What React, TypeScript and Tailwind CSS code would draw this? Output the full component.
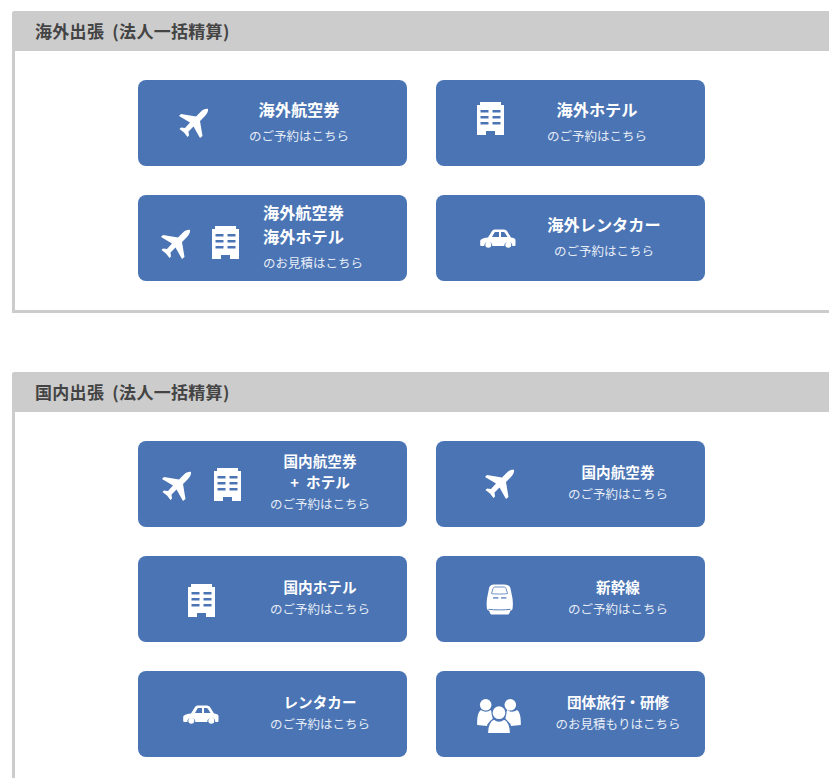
import React from 'react';

const Plane = () => (
  <svg viewBox="0 0 31 31" className="w-[31px] h-[31px] fill-white">
    <path d="M30 1c-2-.5-5 .5-7 2.500L18 8.500 3 6 1 8l11 6.500L7 20l-4-.5L1.500 21 6 24.500 9.500 29l1.500-1.500-.5-4 5-5L22 30l2.500-2L22 13l5-5c2-2 3.500-5 3-7z" />
  </svg>
);

const Hotel = () => (
  <svg viewBox="0 0 27 33" className="w-[27px] h-[33px] fill-white">
    <path
      fillRule="evenodd"
      d="M3 0h21v3h3v30h-9v-4H9v4H0V3h3zM3.500 8v2.500h8V8zm12 0v2.500h8V8zM3.500 14v2.500h8V14zm12 0v2.500h8V14zM3.500 20v2.500h8V20zm12 0v2.500h8V20z"
    />
  </svg>
);

const Car = () => (
  <svg viewBox="0 0 36 19" className="w-[36px] h-[19px] fill-white">
    <path
      fillRule="evenodd"
      d="M.5 11C2 9.500 5 8.800 8 8.500L12 2C13 .8 14 .5 16 .5h7c2 0 3 .5 4 1.500l4 6.500c2 .3 4.500 .8 4.500 2.500v4.500c0 1-.5 1.500-1.500 1.500h-1.700a4 4 0 0 0-8 0H12.300a4 4 0 0 0-8 0H1.500C.5 17 .2 16.500 .2 15.500V12zM12 8l2.500-4.500C15 3 15.500 3 16 3h3v5zm9-5h2c1 0 1.500 .2 2 1l2.500 4H21z"
    />
    <circle cx="8.300" cy="15.800" r="3" />
    <circle cx="28.300" cy="15.800" r="3" />
  </svg>
);

const Train = () => (
  <svg viewBox="0 0 27 31" className="w-[27px] h-[31px]">
    <path
      className="fill-white"
      d="M9 .5h9c4 0 6 1.500 6.500 4l2 10c.5 4 .5 7 0 10.500-.5 1.500-1.500 1.500-2 1.500l-1 2.500c-.5 1-1 1.500-2 1.500H6c-1 0-1.500-.5-2-1.500L3 26.500c-.5 0-1.500 0-2-1.500-.5-3.500-.5-6.500 0-10.500l2-10C3.500 2 5 .5 9 .5z"
    />
    <path d="M5.500 9.500 7 4.500C7.300 3.500 8 3 9 3h9c1 0 1.700 .5 2 1.500l1.500 5c-2 .7-14 .7-16 0z" className="fill-none stroke-[#4a74b4]" strokeWidth=".8" />
    <rect x="7" y="13" width="5.500" height="1.800" rx=".6" className="fill-[#7f9ccb]" />
    <rect x="15" y="13" width="5.500" height="1.800" rx=".6" className="fill-[#7f9ccb]" />
    <path d="M2.500 25.300c6 .8 16 .8 22 0" className="stroke-[#4a74b4] fill-none" strokeWidth=".9" />
  </svg>
);

const Users = () => (
  <svg viewBox="0 0 44 34" className="w-[44px] h-[34px] fill-white">
    <circle cx="8.700" cy="5.800" r="5.800" />
    <circle cx="33.300" cy="5.800" r="5.800" />
    <path d="M.2 26C0 18 1 13 4 11c3 2.200 7 2.200 9.500 0 1 1 2 2.500 2 5v4l-5 5-.5 2z" />
    <path d="M43.800 26C44 18 43 13 40 11c-3 2.200-7 2.200-9.500 0-1 1-2 2.500-2 5v4l5 5 .5 2z" />
    <circle cx="22" cy="13.700" r="7" className="stroke-[#4a74b4]" strokeWidth="1.200" />
    <path d="M10.500 34.500c0-8 2-12.500 6.500-14.500 3 2.500 7 2.500 10 0 4.500 2 6.500 6.500 6.500 14.500z" className="stroke-[#4a74b4]" strokeWidth="1.200" />
  </svg>
);

const PlaneHotel = ({ gap }: { gap: string }) => (
  <div className={`flex items-center ${gap}`}>
    <div className="pt-[5px]">
      <Plane />
    </div>
    <Hotel />
  </div>
);

type Item = {
  icon: React.ReactNode;
  iconBox: string;
  textBox: string;
  titles: string[];
  big?: boolean;
  sub: string;
};

const overseas: Item[] = [
  {
    icon: <Plane />,
    iconBox: 'w-[110px]',
    textBox: 'w-[102px] items-center',
    titles: ['海外航空券'],
    big: true,
    sub: 'のご予約はこちら',
  },
  {
    icon: <Hotel />,
    iconBox: 'w-[108px] pb-[9px]',
    textBox: 'w-[106px] items-center',
    titles: ['海外ホテル'],
    big: true,
    sub: 'のご予約はこちら',
  },
  {
    icon: <PlaneHotel gap="gap-[21px]" />,
    iconBox: 'w-[123px] pt-[8px]',
    textBox: 'ml-[2px] w-[110px] items-start',
    titles: ['海外航空券', '海外ホテル'],
    big: true,
    sub: 'のお見積はこちら',
  },
  {
    icon: <Car />,
    iconBox: 'w-[124px]',
    textBox: 'w-[88px] items-center',
    titles: ['海外レンタカー'],
    big: true,
    sub: 'のご予約はこちら',
  },
];

const domestic: Item[] = [
  {
    icon: <PlaneHotel gap="gap-[22px]" />,
    iconBox: 'w-[125px]',
    textBox: 'ml-[2px] w-[110px] items-center',
    titles: ['国内航空券', '+ ホテル'],
    sub: 'のご予約はこちら',
  },
  {
    icon: <Plane />,
    iconBox: 'w-[126px]',
    textBox: 'w-[112px] items-center',
    titles: ['国内航空券'],
    sub: 'のご予約はこちら',
  },
  {
    icon: <Hotel />,
    iconBox: 'w-[126px] pt-[2px]',
    textBox: 'w-[112px] items-center',
    titles: ['国内ホテル'],
    sub: 'のご予約はこちら',
  },
  {
    icon: <Train />,
    iconBox: 'w-[126px]',
    textBox: 'w-[112px] items-center',
    titles: ['新幹線'],
    sub: 'のご予約はこちら',
  },
  {
    icon: <Car />,
    iconBox: 'w-[125px]',
    textBox: 'w-[114px] items-center',
    titles: ['レンタカー'],
    sub: 'のご予約はこちら',
  },
  {
    icon: <Users />,
    iconBox: 'w-[126px] pt-[4px]',
    textBox: 'w-[112px] items-center',
    titles: ['団体旅行・研修'],
    sub: 'のお見積もりはこちら',
  },
];

const Tile = ({ item }: { item: Item }) => (
  <a className="flex items-center h-[86px] rounded-lg bg-[#4a74b4] text-white">
    <div className={`flex justify-center shrink-0 ${item.iconBox}`}>{item.icon}</div>
    <div className={`shrink-0 flex flex-col whitespace-nowrap ${item.big ? 'pb-[2px]' : 'pb-[4px]'} ${item.textBox}`}>
      {item.titles.map((t) => (
        <div key={t} className={`font-bold [word-spacing:4px] ${item.big ? 'text-[16.2px] leading-6' : 'text-[14.6px] leading-[21px]'}`}>
          {t}
        </div>
      ))}
      <div className={`text-[12.5px] text-[#e6ecf6] ${item.big ? 'leading-6 mt-[3px]' : 'leading-[21px] mt-px'}`}>{item.sub}</div>
    </div>
  </a>
);

const Panel = ({ title, items }: { title: string; items: Item[] }) => (
  <section className="w-[830px] rounded-t-[3px] border-l-[3px] border-b-[3px] border-[#cccccc] bg-white">
    <h2 className="-ml-[3px] h-10 pl-[23px] flex items-center rounded-t-[3px] bg-[#cccccc] text-[17px] font-bold text-[#444444] [word-spacing:4px] tracking-[0.3px]">
      {title}
    </h2>
    <div className="grid grid-cols-[269px_269px] gap-[29px] pl-[123px] py-[29px]">
      {items.map((it, i) => (
        <Tile key={i} item={it} />
      ))}
    </div>
  </section>
);

export default function App() {
  return (
    <div className="h-[778px] overflow-hidden bg-white pl-3 pt-[11px] font-['Noto_Sans_CJK_JP','Liberation_Sans',sans-serif]">
      <div className="flex flex-col gap-[59px] w-[830px]">
        <Panel title="海外出張 (法人一括精算)" items={overseas} />
        <Panel title="国内出張 (法人一括精算)" items={domestic} />
      </div>
    </div>
  );
}
